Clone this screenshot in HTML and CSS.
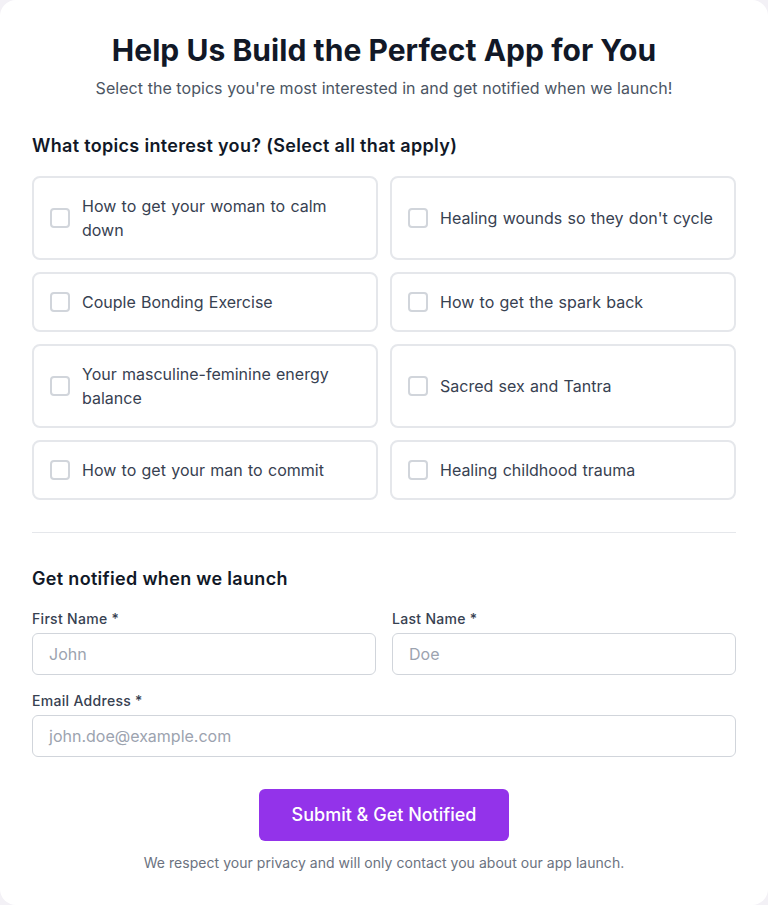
FILE: index.html
```html
<!DOCTYPE html>
<html lang="en">
<head>
<meta charset="utf-8">
<title>Help Us Build the Perfect App for You</title>
<link rel="stylesheet" href="styles.css">
</head>
<body>
<main class="card">
  <header class="header">
    <h1 class="title">Help Us Build the Perfect App for You</h1>
    <p class="subtitle">Select the topics you're most interested in and get notified when we launch!</p>
  </header>

  <section class="topics">
    <h2 class="section-title">What topics interest you? (Select all that apply)</h2>
    <div class="topic-grid">
      <label class="topic"><span class="box"></span><span class="topic-text">How to get your woman to calm down</span></label>
      <label class="topic"><span class="box"></span><span class="topic-text">Healing wounds so they don't cycle</span></label>
      <label class="topic"><span class="box"></span><span class="topic-text">Couple Bonding Exercise</span></label>
      <label class="topic"><span class="box"></span><span class="topic-text">How to get the spark back</span></label>
      <label class="topic"><span class="box"></span><span class="topic-text">Your masculine-feminine energy balance</span></label>
      <label class="topic"><span class="box"></span><span class="topic-text">Sacred sex and Tantra</span></label>
      <label class="topic"><span class="box"></span><span class="topic-text">How to get your man to commit</span></label>
      <label class="topic"><span class="box"></span><span class="topic-text">Healing childhood trauma</span></label>
    </div>
  </section>

  <hr class="divider">

  <section class="notify">
    <h2 class="section-title notify-title">Get notified when we launch</h2>
    <div class="name-row">
      <div class="field">
        <label class="field-label">First Name *</label>
        <div class="input"><span class="placeholder">John</span></div>
      </div>
      <div class="field">
        <label class="field-label">Last Name *</label>
        <div class="input"><span class="placeholder">Doe</span></div>
      </div>
    </div>
    <div class="field">
      <label class="field-label">Email Address *</label>
      <div class="input"><span class="placeholder">john.doe@example.com</span></div>
    </div>
    <div class="actions">
      <button class="submit" type="button">Submit &amp; Get Notified</button>
      <p class="privacy">We respect your privacy and will only contact you about our app launch.</p>
    </div>
  </section>
</main>
</body>
</html>
```

FILE: styles.css
```css
* { box-sizing: border-box; }

html, body {
  margin: 0;
  padding: 0;
  background: #f3f1f6;
}

body {
  font-family: Inter, "Noto Sans", "Liberation Sans", sans-serif;
  color: #111827;
}

.card {
  background: #ffffff;
  border-radius: 16px;
  padding: 32px;
  width: 768px;
  min-height: 905px;
}

.header {
  text-align: center;
  margin-bottom: 32px;
}

.title {
  margin: 0 0 8px;
  font-size: 30px;
  line-height: 36px;
  font-weight: 700;
  letter-spacing: 0.05px;
  color: #111827;
}

.subtitle {
  margin: 0;
  font-size: 16px;
  line-height: 24px;
  letter-spacing: 0.05px;
  color: #4b5563;
}

.section-title {
  margin: 0 0 16px;
  font-size: 18px;
  line-height: 28px;
  font-weight: 600;
  letter-spacing: 0.32px;
  color: #111827;
}

.topic-grid {
  display: grid;
  grid-template-columns: 1fr 1fr;
  gap: 12px;
}

.topic {
  display: flex;
  align-items: center;
  gap: 12px;
  border: 2px solid #e5e7eb;
  border-radius: 8px;
  padding: 16px;
}

.box {
  flex: 0 0 20px;
  width: 20px;
  height: 20px;
  border: 2px solid #d1d5db;
  border-radius: 4px;
  background: #fff;
}

.topic-text {
  font-size: 16px;
  line-height: 24px;
  word-spacing: 0.8px;
  color: #374151;
}

.divider {
  border: 0;
  border-top: 1px solid #e5e7eb;
  margin: 32px 0 32px;
}

.notify-title {
  margin-bottom: 16px;
}

.name-row {
  display: grid;
  grid-template-columns: 1fr 1fr;
  gap: 16px;
  margin-bottom: 16px;
}

.field-label {
  display: block;
  font-size: 14px;
  line-height: 20px;
  font-weight: 500;
  letter-spacing: 0.3px;
  color: #374151;
  margin-bottom: 4px;
}

.input {
  border: 1px solid #d1d5db;
  border-radius: 6px;
  padding: 8px 16px;
  height: 42px;
  font-size: 16px;
  line-height: 24px;
}

.placeholder {
  color: #9ca3af;
}

.actions {
  margin-top: 32px;
  display: flex;
  flex-direction: column;
  align-items: center;
}

.submit {
  font-family: inherit;
  background: #9333ea;
  color: #ffffff;
  border: 0;
  border-radius: 6px;
  width: 250px;
  height: 52px;
  font-size: 18px;
  line-height: 28px;
  font-weight: 500;
}

.privacy {
  margin: 12px 0 0;
  font-size: 14px;
  line-height: 20px;
  letter-spacing: 0.04px;
  color: #6b7280;
}
```
